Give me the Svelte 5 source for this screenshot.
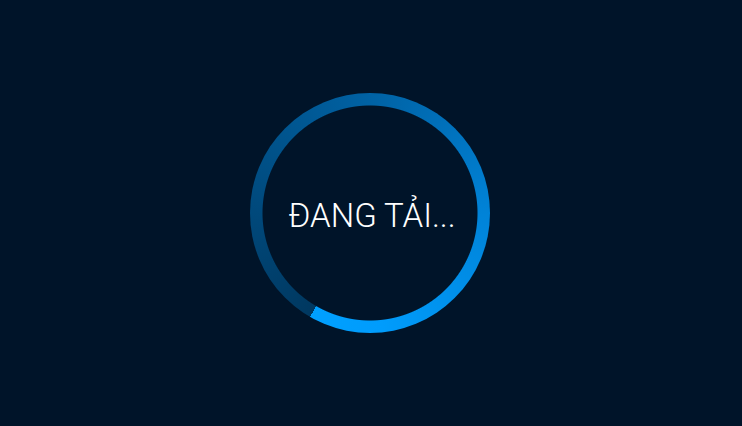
<script>
	/**
	 * Text shown inside the ring
	 * @type {string}
	 */
	export let label = "ĐANG TẢI...";

	/**
	 * Angle where the bright end of the ring meets the dark one
	 * @type {number}
	 */
	export let angle = 210;

	$: _style = `--angle: ${angle}deg;`;
</script>

<main class="loading-screen">
	<div class="loader" role="status" style={_style}>
		<span class="label">{label}</span>
	</div>
</main>

<style>
	:global(body) {
		background: #001429;
	}

	.loading-screen {
		display: flex;
		box-sizing: border-box;
		min-height: 100vh;
		padding-right: 2px;
		align-items: center;
		justify-content: center;
	}

	.loader {
		display: grid;
		box-sizing: border-box;
		width: 240px;
		height: 240px;
		padding: 6px 0 0 4px;
		place-items: center;
		border-radius: 50%;
		background:
			radial-gradient(circle closest-side, #001429 107px, transparent 108px),
			conic-gradient(from var(--angle), #003860, #0062a4 42%, #0083d8 67%, #009cfc 90%, #00a0ff);
	}

	.label {
		color: #fff;
		font-family: Roboto, "Liberation Sans", sans-serif;
		font-size: 33px;
		font-weight: 300;
		line-height: 40px;
		white-space: nowrap;
	}
</style>
